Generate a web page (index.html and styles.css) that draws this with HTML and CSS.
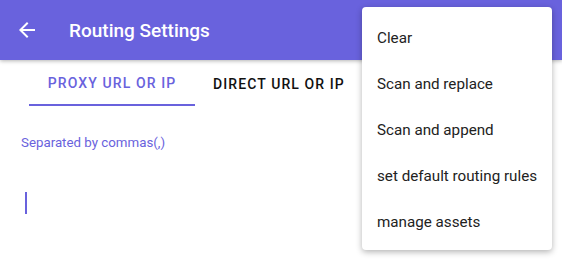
FILE: index.html
```html
<!DOCTYPE html>
<html lang="en">
<head>
    <meta charset="UTF-8">
    <title>Routing Settings</title>
    <link rel="stylesheet" href="styles.css">
</head>
<body>
    <div class="screen">
        <div class="toolbar">
            <svg class="back" width="24" height="24" viewBox="0 0 24 24">
                <path d="M20 11H7.83l5.59-5.59L12 4l-8 8 8 8 1.41-1.41L7.83 13H20v-2z" fill="#fff"/>
            </svg>
            <span class="title">Routing Settings</span>
        </div>
        <div class="tabs">
            <div class="tab active">PROXY URL OR IP</div>
            <div class="tab">DIRECT URL OR IP</div>
        </div>
        <div class="content">
            <div class="hint">Separated by commas(,)</div>
            <div class="cursor"></div>
        </div>

        <div class="menu">
            <div class="item">Clear</div>
            <div class="item">Scan and replace</div>
            <div class="item">Scan and append</div>
            <div class="item">set default routing rules</div>
            <div class="item">manage assets</div>
        </div>
    </div>
</body>
</html>
```

FILE: styles.css
```css
body {
    margin: 0;
    font-family: Roboto, 'Noto Sans', sans-serif;
    background: #fff;
}
.screen {
    position: relative;
    width: 562px;
    height: 260px;
    overflow: hidden;
}
.toolbar {
    height: 60px;
    background-color: #6962dd;
    display: flex;
    align-items: center;
    padding-left: 15px;
    box-shadow: 0 1px 4px rgba(0, 0, 0, 0.3);
    position: relative;
    z-index: 1;
}
.back {
    margin-right: 30px;
}
.title {
    color: #fff;
    font-size: 19px;
    font-weight: 500;
}
.tabs {
    display: flex;
    padding-left: 29px;
    height: 46px;
}
.tab {
    font-size: 14px;
    font-weight: 500;
    letter-spacing: 1.1px;
    color: #111;
    display: flex;
    align-items: center;
    justify-content: center;
    padding-top: 2px;
}
.tab.active {
    width: 166px;
    color: #6962dd;
    border-bottom: 2px solid #6962dd;
    box-sizing: border-box;
}
.tab + .tab {
    margin-left: 18px;
}
.content {
    padding: 29px 21px 0;
}
.hint {
    font-size: 13.3px;
    color: #6962dd;
}
.cursor {
    width: 2px;
    height: 22px;
    background: #6962dd;
    margin-top: 42px;
    margin-left: 4px;
}
.menu {
    position: absolute;
    top: 7px;
    left: 362px;
    width: 190px;
    height: 243px;
    background: #fff;
    border-radius: 4px;
    box-shadow: 0 2px 6px rgba(0, 0, 0, 0.3);
    z-index: 2;
    padding-top: 8px;
    box-sizing: border-box;
}
.item {
    height: 46px;
    line-height: 46px;
    padding-left: 15px;
    font-size: 15.2px;
    color: #222;
}
```
